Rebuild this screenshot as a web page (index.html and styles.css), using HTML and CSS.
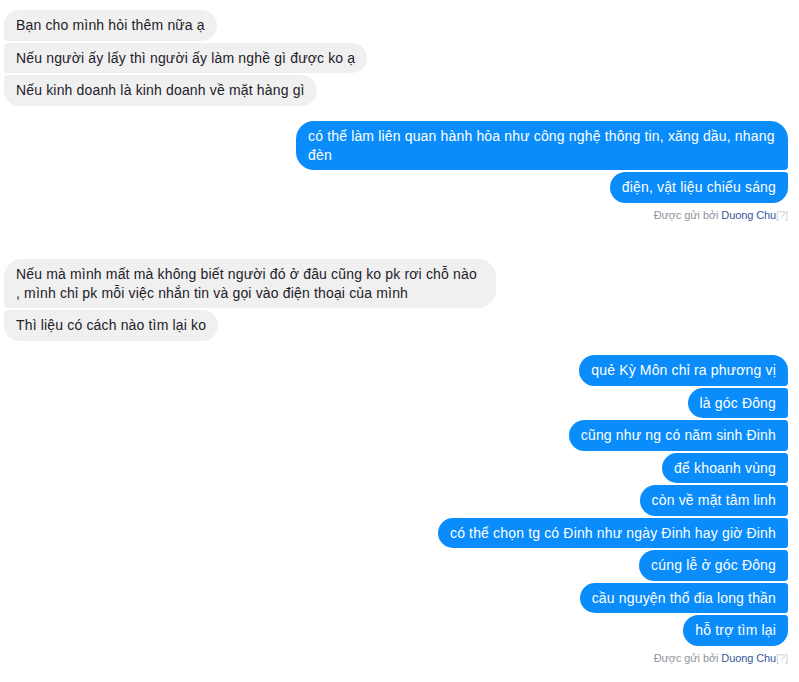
FILE: index.html
```html
<!DOCTYPE html>
<html lang="vi">
<head>
<meta charset="utf-8">
<link rel="stylesheet" href="styles.css">
</head>
<body>
<div class="chat">
  <div class="group in g1">
    <div class="msg">Bạn cho mình hỏi thêm nữa ạ</div>
    <div class="msg">Nếu người ấy lấy thì người ấy làm nghề gì được ko ạ</div>
    <div class="msg">Nếu kinh doanh là kinh doanh về mặt hàng gì</div>
  </div>
  <div class="group out g2">
    <div class="msg wide">có thể làm liên quan hành hỏa như công nghệ thông tin, xăng dầu, nhang đèn</div>
    <div class="msg">điện, vật liệu chiếu sáng</div>
    <div class="sent">Được gửi bởi <span class="name">Duong Chu</span><span class="q">[?]</span></div>
  </div>
  <div class="group in g3">
    <div class="msg wide">Nếu mà mình mất mà không biết người đó ở đâu cũng ko pk rơi chỗ nào , mình chỉ pk mỗi việc nhắn tin và gọi vào điện thoại của mình</div>
    <div class="msg">Thì liệu có cách nào tìm lại ko</div>
  </div>
  <div class="group out g4">
    <div class="msg">quẻ Kỳ Môn chỉ ra phương vị</div>
    <div class="msg">là góc Đông</div>
    <div class="msg">cũng như ng có năm sinh Đinh</div>
    <div class="msg">để khoanh vùng</div>
    <div class="msg">còn về mặt tâm linh</div>
    <div class="msg">có thể chọn tg có Đinh như ngày Đinh hay giờ Đinh</div>
    <div class="msg">cúng lễ ở góc Đông</div>
    <div class="msg">cầu nguyện thổ đia long thần</div>
    <div class="msg">hỗ trợ tìm lại</div>
    <div class="sent">Được gửi bởi <span class="name">Duong Chu</span><span class="q">[?]</span></div>
  </div>
</div>
</body>
</html>
```
FILE: styles.css
```css
html, body {
  margin: 0;
  padding: 0;
  background: #ffffff;
}
body {
  font-family: "Liberation Sans", Arial, sans-serif;
  font-size: 14px;
  color: #1d2129;
}
.chat {
  padding: 10px 11px 0 4px;
  display: flex;
  flex-direction: column;
}
.group {
  display: flex;
  flex-direction: column;
  gap: 2px;
}
.in { align-items: flex-start; }
.out { align-items: flex-end; }
.msg {
  padding: 6px 12px;
  line-height: 18.5px;
  letter-spacing: 0.16px;
  border-radius: 4px 18px 18px 4px;
  background: #f1f0f0;
  color: #1d2129;
}
.in .msg:first-child { border-top-left-radius: 18px; }
.in .msg:last-child { border-bottom-left-radius: 18px; }
.out .msg {
  background: #0a8cfb;
  color: #ffffff;
  border-radius: 18px 4px 4px 18px;
}
.out .msg:first-child { border-top-right-radius: 18px; }
.out .msg:nth-last-child(2) { border-bottom-right-radius: 18px; }
.wide { width: 468px; }
.g2 { margin-top: 15.5px; }
.g3 { margin-top: 37.5px; }
.g4 { margin-top: 14.5px; }
.sent {
  margin-top: 3px;
  font-size: 11px;
  line-height: 14px;
  letter-spacing: -0.1px;
  color: #90949c;
}
.name { color: #365899; }
.q { color: #ccd0d5; }
```
